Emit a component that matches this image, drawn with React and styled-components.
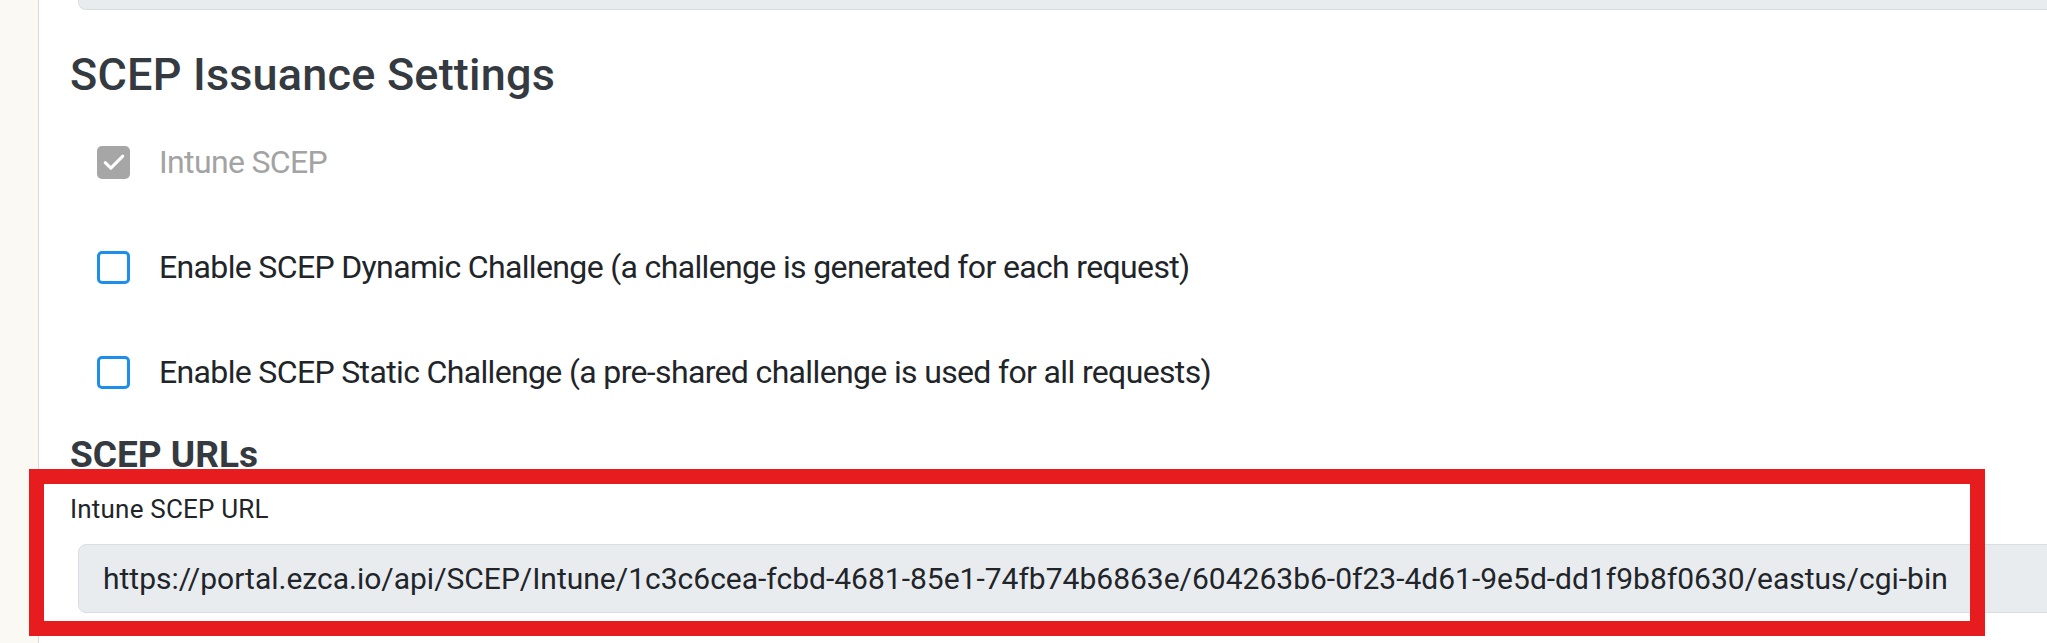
import React from "react";
import styled, { createGlobalStyle } from "styled-components";

const Global = createGlobalStyle`
  html, body { margin: 0; padding: 0; background: #ffffff; overflow: hidden; }
  body { font-family: Roboto, "Liberation Sans", sans-serif; color: #212529; }
  * { box-sizing: border-box; }
`;

const Page = styled.div`
  display: flex;
  height: 643px;
  width: 2047px;
  overflow: hidden;
`;

const Sidebar = styled.aside`
  flex: 0 0 39px;
  background: #fbf9f4;
  border-right: 1px solid #d9d9d9;
`;

const Main = styled.main`
  flex: 1;
  min-width: 0;
  padding-left: 31px;
  display: flex;
  flex-direction: column;
`;

const CutInput = styled.div`
  height: 10px;
  margin-left: 8px;
  margin-right: -20px;
  background: #e9ecef;
  border: 1px solid #dadee2;
  border-top: none;
  border-radius: 0 0 0 8px;
`;

const Heading = styled.h2`
  margin: ${(p) => p.$mt}px 0 0;
  font-size: ${(p) => p.$size}px;
  line-height: ${(p) => p.$lh}px;
  font-weight: ${(p) => p.$weight || 500};
  color: #343a40;
  letter-spacing: ${(p) => p.$ls || 0}px;
`;

const Options = styled.div`
  display: flex;
  flex-direction: column;
  gap: 57px;
  margin-top: 36px;
  padding-left: 27px;
`;

const Row = styled.label`
  display: flex;
  align-items: center;
  gap: 29px;
  height: 48px;
  font-size: 32px;
  line-height: 48px;
  letter-spacing: -0.65px;
  color: ${(p) => (p.$disabled ? "#a3a3a3" : "#212529")};
`;

const Box = styled.span`
  flex: 0 0 33px;
  width: 33px;
  height: 33px;
  border-radius: 5px;
  display: flex;
  align-items: center;
  justify-content: center;
  background: ${(p) => (p.$checked ? "#a6a6a6" : "#ffffff")};
  border: ${(p) => (p.$checked ? "none" : "3px solid #1e8fe8")};
`;

const Field = styled.div`
  position: relative;
  margin-top: 14px;
  display: flex;
  flex-direction: column;
`;

const FieldLabel = styled.div`
  font-size: 26px;
  line-height: 39px;
  letter-spacing: 0.2px;
  color: #212529;
`;

const UrlInput = styled.div`
  margin-top: 15px;
  margin-left: 8px;
  margin-right: -40px;
  height: 69px;
  display: flex;
  align-items: center;
  padding-left: 24px;
  background: #e9ecef;
  border: 1px solid #dadee2;
  border-radius: 8px;
  font-size: 30px;
  color: #212529;
  white-space: nowrap;
`;

const Highlight = styled.div`
  position: absolute;
  left: -41px;
  top: -21px;
  width: 1956px;
  height: 167px;
  border: 15px solid #e61c1f;
  pointer-events: none;
`;

function Check({ checked }) {
  return (
    <Box $checked={checked}>
      {checked && (
        <svg width="28" height="28" viewBox="0 0 24 24" fill="none">
          <path d="M4.5 12.5l4.8 4.8L19.5 7" stroke="#ffffff" strokeWidth="2.6" strokeLinecap="round" strokeLinejoin="round" />
        </svg>
      )}
    </Box>
  );
}

export default function App() {
  return (
    <>
      <Global />
      <Page>
        <Sidebar />
        <Main>
          <CutInput />
          <Heading $mt={38} $size={45} $lh={54} $ls={0.2}>SCEP Issuance Settings</Heading>
          <Options>
            <Row $disabled>
              <Check checked />
              Intune SCEP
            </Row>
            <Row>
              <Check />
              Enable SCEP Dynamic Challenge (a challenge is generated for each request)
            </Row>
            <Row>
              <Check />
              Enable SCEP Static Challenge (a pre-shared challenge is used for all requests)
            </Row>
          </Options>
          <Heading $mt={38} $size={37} $lh={42} $weight={700}>SCEP URLs</Heading>
          <Field>
            <FieldLabel>Intune SCEP URL</FieldLabel>
            <UrlInput>
              https://portal.ezca.io/api/SCEP/Intune/1c3c6cea-fcbd-4681-85e1-74fb74b6863e/604263b6-0f23-4d61-9e5d-dd1f9b8f0630/eastus/cgi-bin
            </UrlInput>
            <Highlight />
          </Field>
        </Main>
      </Page>
    </>
  );
}
